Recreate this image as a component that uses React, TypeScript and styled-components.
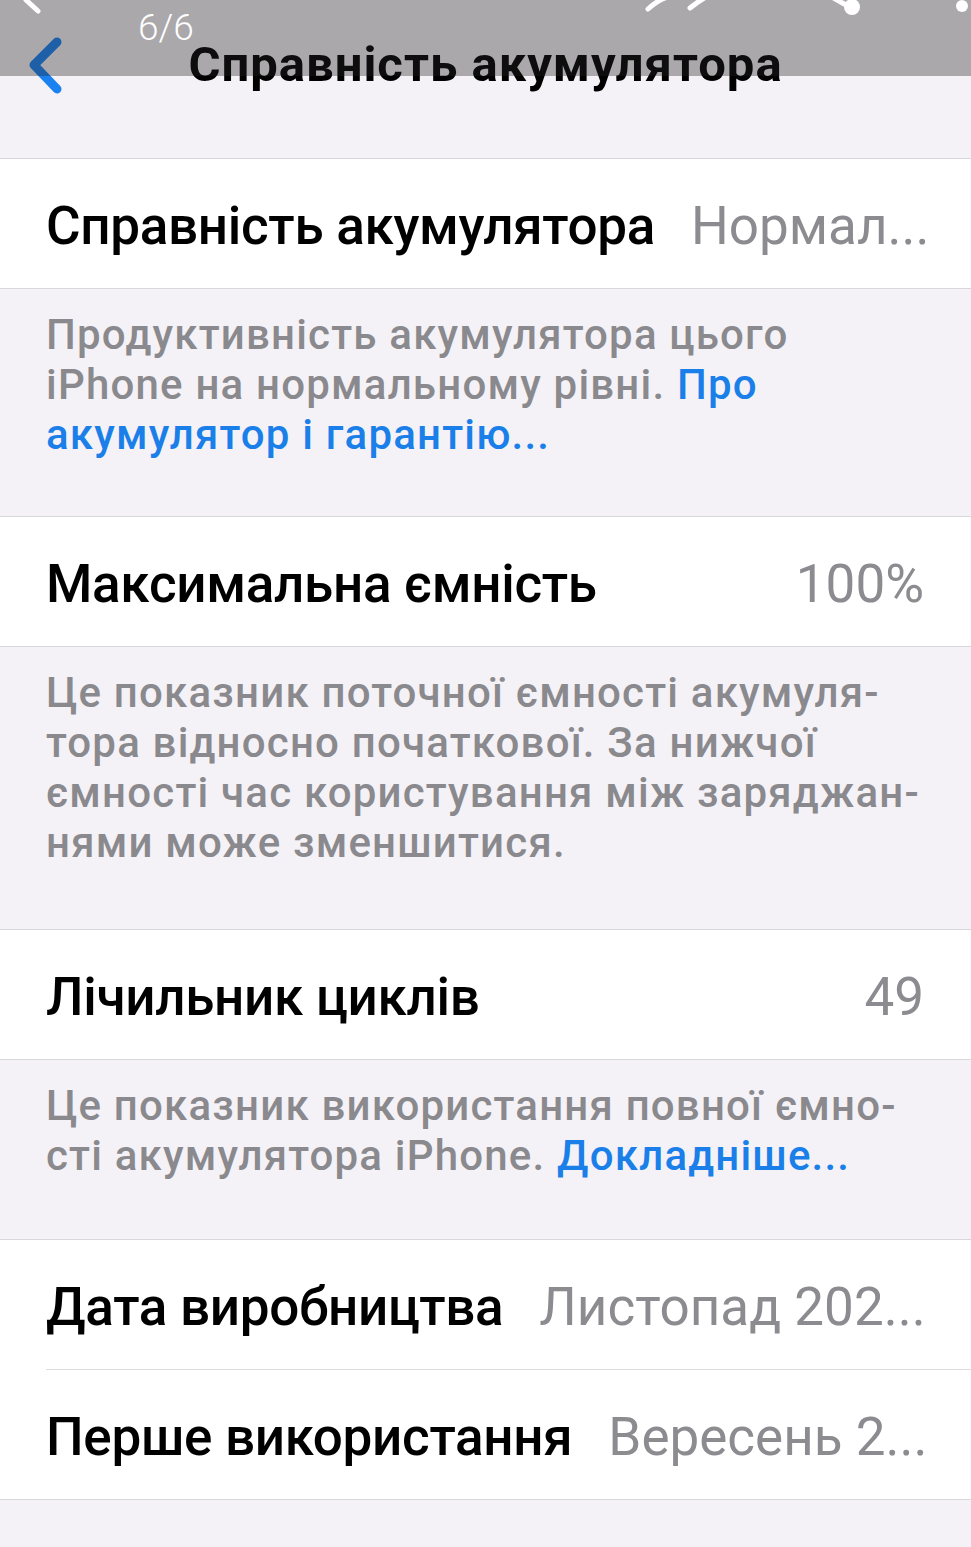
import styled, { createGlobalStyle } from "styled-components";

const GlobalStyle = createGlobalStyle`
  html, body {
    margin: 0;
    padding: 0;
    background: #f4f2f6;
  }
  body {
    font-family: Roboto, "Liberation Sans", sans-serif;
    -webkit-font-smoothing: antialiased;
  }
`;

type Row = { label: string; value: string };

const capacityNote = [
  "Це показник поточної ємності акумуля-",
  "тора відносно початкової. За нижчої",
  "ємності час користування між заряджан-",
  "нями може зменшитися.",
];

const dates: Row[] = [
  { label: "Дата виробництва", value: "Листопад 202..." },
  { label: "Перше використання", value: "Вересень 2..." },
];

function App() {
  return (
    <>
      <GlobalStyle />
      <Screen>
        <NavBar>
          <BackButton aria-label="Назад">
            <svg width="36" height="58" viewBox="0 0 36 58">
              <path
                d="M31 6 L8 29 L31 53"
                fill="none"
                stroke="#1a82f0"
                strokeWidth="9"
                strokeLinecap="round"
                strokeLinejoin="round"
              />
            </svg>
          </BackButton>
          <NavTitle>Справність акумулятора</NavTitle>
        </NavBar>

        <Card>
          <CellRow>
            <Label>Справність акумулятора</Label>
            <Value>Нормал...</Value>
          </CellRow>
        </Card>
        <Footer>
          Продуктивність акумулятора цього
          <br />
          iPhone на нормальному рівні. <Link>Про</Link>
          <br />
          <Link>акумулятор і гарантію...</Link>
        </Footer>

        <Card>
          <CellRow>
            <Label>Максимальна ємність</Label>
            <Value>100%</Value>
          </CellRow>
        </Card>
        <Footer $extra={5}>
          {capacityNote.map((l, i) => (
            <span key={i}>
              {l}
              {i < capacityNote.length - 1 && <br />}
            </span>
          ))}
        </Footer>

        <Card>
          <CellRow>
            <Label>Лічильник циклів</Label>
            <Value>49</Value>
          </CellRow>
        </Card>
        <Footer $extra={2}>
          Це показник використання повної ємно-
          <br />
          сті акумулятора iPhone. <Link>Докладніше...</Link>
        </Footer>

        <Card>
          {dates.map((r, i) => (
            <CellRow key={r.label} $divided={i > 0}>
              <Label>{r.label}</Label>
              <Value>{r.value}</Value>
            </CellRow>
          ))}
        </Card>

        <ViewerOverlay>
          <PageCount>6/6</PageCount>
          <svg width="971" height="20" viewBox="0 0 971 20">
            <path d="M26 0 L38 11" stroke="#fff" strokeWidth="5" strokeLinecap="round" />
            <path d="M648 9 Q660 -2 672 -4" stroke="#fff" strokeWidth="5" fill="none" strokeLinecap="round" />
            <path d="M690 8 Q700 0 708 -4" stroke="#fff" strokeWidth="5" fill="none" strokeLinecap="round" />
            <path d="M830 -4 L846 5" stroke="#fff" strokeWidth="5" strokeLinecap="round" />
            <circle cx="852" cy="7" r="8" fill="#fff" />
            <circle cx="962" cy="6" r="6" fill="#fff" />
          </svg>
        </ViewerOverlay>
      </Screen>
    </>
  );
}

export default App;

const Screen = styled.div`
  position: relative;
  width: 971px;
  min-height: 1547px;
  background: #f4f2f6;
  overflow: hidden;
`;

const NavBar = styled.header`
  position: relative;
  height: 158px;
  display: flex;
  justify-content: center;
  align-items: flex-start;
  padding-top: 35px;
  box-sizing: border-box;
`;

const BackButton = styled.div`
  position: absolute;
  left: 26px;
  top: 36px;
  display: flex;
`;

const NavTitle = styled.h1`
  margin: 0;
  font-family: Roboto, "Liberation Sans", sans-serif;
  font-weight: 700;
  font-size: 49px;
  line-height: 60px;
  letter-spacing: 1px;
  color: #000;
`;

const Card = styled.section`
  background: #fff;
  border-top: 1px solid #d9d7dc;
  border-bottom: 1px solid #d9d7dc;
`;

const CellRow = styled.div<{ $divided?: boolean }>`
  height: 129px;
  display: flex;
  align-items: center;
  justify-content: space-between;
  gap: 36px;
  padding: 4px 47px 0 46px;
  box-sizing: border-box;
  position: relative;
  ${(p) =>
    p.$divided &&
    `
    &::before {
      content: "";
      position: absolute;
      left: 46px;
      right: 0;
      top: -1px;
      height: 1px;
      background: #dedce1;
    }
    margin-top: 1px;
  `}
`;

const Label = styled.span`
  font-size: 53px;
  font-weight: 500;
  letter-spacing: -0.3px;
  color: #000;
  white-space: nowrap;
`;

const Value = styled.span`
  font-size: 53px;
  font-weight: 400;
  letter-spacing: 0px;
  color: #8c8b90;
  white-space: nowrap;
`;

const Footer = styled.p<{ $extra?: number }>`
  margin: 0;
  padding: 21px 47px ${(p) => 56 + (p.$extra ?? 0)}px 46px;
  font-size: 42px;
  line-height: 50px;
  font-weight: 500;
  color: #8a898e;
  letter-spacing: 1.2px;
`;

const Link = styled.span`
  color: #1a7fe8;
`;

const ViewerOverlay = styled.div`
  position: absolute;
  top: 0;
  left: 0;
  width: 100%;
  height: 76px;
  background: rgba(40, 36, 40, 0.36);
  pointer-events: none;
  svg {
    position: absolute;
    top: 0;
    left: 0;
  }
`;

const PageCount = styled.span`
  position: absolute;
  left: 138px;
  top: 6px;
  font-family: Roboto, "Liberation Sans", sans-serif;
  font-weight: 300;
  font-size: 37px;
  letter-spacing: 0px;
  color: #fff;
`;
